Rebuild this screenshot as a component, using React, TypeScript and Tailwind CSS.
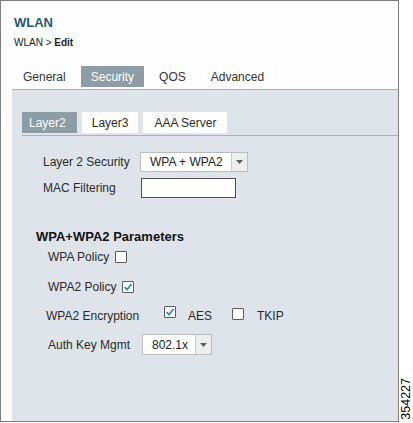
import React from "react";

function Check({ checked, className = "" }: { checked?: boolean; className?: string }) {
  return (
    <div className={"w-[12px] h-[12px] border border-[#5c5c5c] bg-white rounded-[1px] flex items-center justify-center shrink-0 " + className}>
      {checked && (
        <svg width="10" height="10" viewBox="0 0 10 10">
          <polyline points="1.6,5.2 4,7.6 8.6,2" fill="none" stroke="#3a8da2" strokeWidth="1.8" />
        </svg>
      )}
    </div>
  );
}

function Select({ text, w, h }: { text: string; w: string; h: string }) {
  return (
    <div className={"flex bg-white border border-[#b9bdc1] " + w + " " + h}>
      <div className="flex-1 flex items-center pl-[9px] text-[12px] text-[#222]">{text}</div>
      <div className="w-[16px] border-l border-[#c9cccf] bg-[#eceef0] flex items-center justify-center">
        <svg width="7" height="4" viewBox="0 0 7 4">
          <polygon points="0,0 7,0 3.5,4" fill="#5a5e62" />
        </svg>
      </div>
    </div>
  );
}

export default function App() {
  return (
    <div className="w-[413px] h-[423px] bg-white flex font-['Liberation_Sans',Arial,sans-serif] text-[#2a2a2a]">
      <div className="w-[399px] h-[422px] border border-[#7d7d7d] flex flex-col bg-[#fdfdfd]">
        <div className="pl-[13px] pt-[14px]">
          <div className="text-[13px] leading-[16px] font-bold text-[#1f5c6c]">WLAN</div>
          <div className="mt-[6px] text-[10px] leading-[12px] text-[#222]">
            WLAN &gt; <span className="font-bold">Edit</span>
          </div>
        </div>
        <div className="mt-[17px] ml-[12px] mb-[2px] flex gap-[5px] text-[12px] text-[#333]">
          <div className="h-[21px] px-[10px] flex items-center">General</div>
          <div className="h-[21px] px-[10px] flex items-center bg-[#8c9da5] text-white">Security</div>
          <div className="h-[21px] px-[10px] flex items-center">QOS</div>
          <div className="h-[21px] px-[10px] flex items-center bg-white">Advanced</div>
        </div>
        <div className="ml-[11px] flex-1 bg-[#dfe4eb] border-t border-[#a9b4ba] flex flex-col text-[12px] text-[#2a2a2a]">
          <div className="mt-[22px] ml-[10px] pb-[2px] border-b border-[#a9b4ba] flex gap-[5px]">
            <div className="h-[21px] pl-[7px] pr-[11px] flex items-center bg-[#8c9da5] text-white">Layer2</div>
            <div className="h-[21px] px-[10px] flex items-center bg-white">Layer3</div>
            <div className="h-[21px] px-[11px] flex items-center bg-white">AAA Server</div>
          </div>

          <div className="mt-[16px] ml-[31px] flex items-center h-[20px]">
            <div className="w-[97px]">Layer 2 Security</div>
            <Select text="WPA + WPA2" w="w-[108px]" h="h-[20px]" />
          </div>
          <div className="mt-[6px] ml-[31px] flex items-center h-[20px]">
            <div className="w-[98px]">MAC Filtering</div>
            <div className="w-[95px] h-[20px] bg-white border border-[#4d4d4d]" />
          </div>

          <div className="mt-[31px] ml-[24px] text-[13px] leading-[16px] font-bold text-[#111]">WPA+WPA2 Parameters</div>

          <div className="mt-[4px] ml-[36px] flex items-center h-[16px]">
            <div>WPA Policy</div>
            <Check className="ml-[6px]" />
          </div>
          <div className="mt-[14px] ml-[36px] flex items-center h-[16px]">
            <div>WPA2 Policy</div>
            <Check checked className="ml-[6px]" />
          </div>
          <div className="mt-[13px] ml-[34px] flex items-center h-[16px]">
            <div className="w-[118px]">WPA2 Encryption</div>
            <Check checked className="-mt-[9px]" />
            <div className="ml-[12px]">AES</div>
            <Check className="ml-[20px] -mt-[5px]" />
            <div className="ml-[13px]">TKIP</div>
          </div>
          <div className="mt-[10px] ml-[36px] flex items-center h-[21px]">
            <div className="w-[94px]">Auth Key Mgmt</div>
            <Select text="802.1x" w="w-[70px]" h="h-[21px]" />
          </div>
        </div>
      </div>
      <div className="flex-1 flex flex-col justify-end items-center pb-[3px]">
        <div className="[writing-mode:vertical-rl] rotate-180 text-[12.5px] leading-[12px] text-black">354227</div>
      </div>
    </div>
  );
}
